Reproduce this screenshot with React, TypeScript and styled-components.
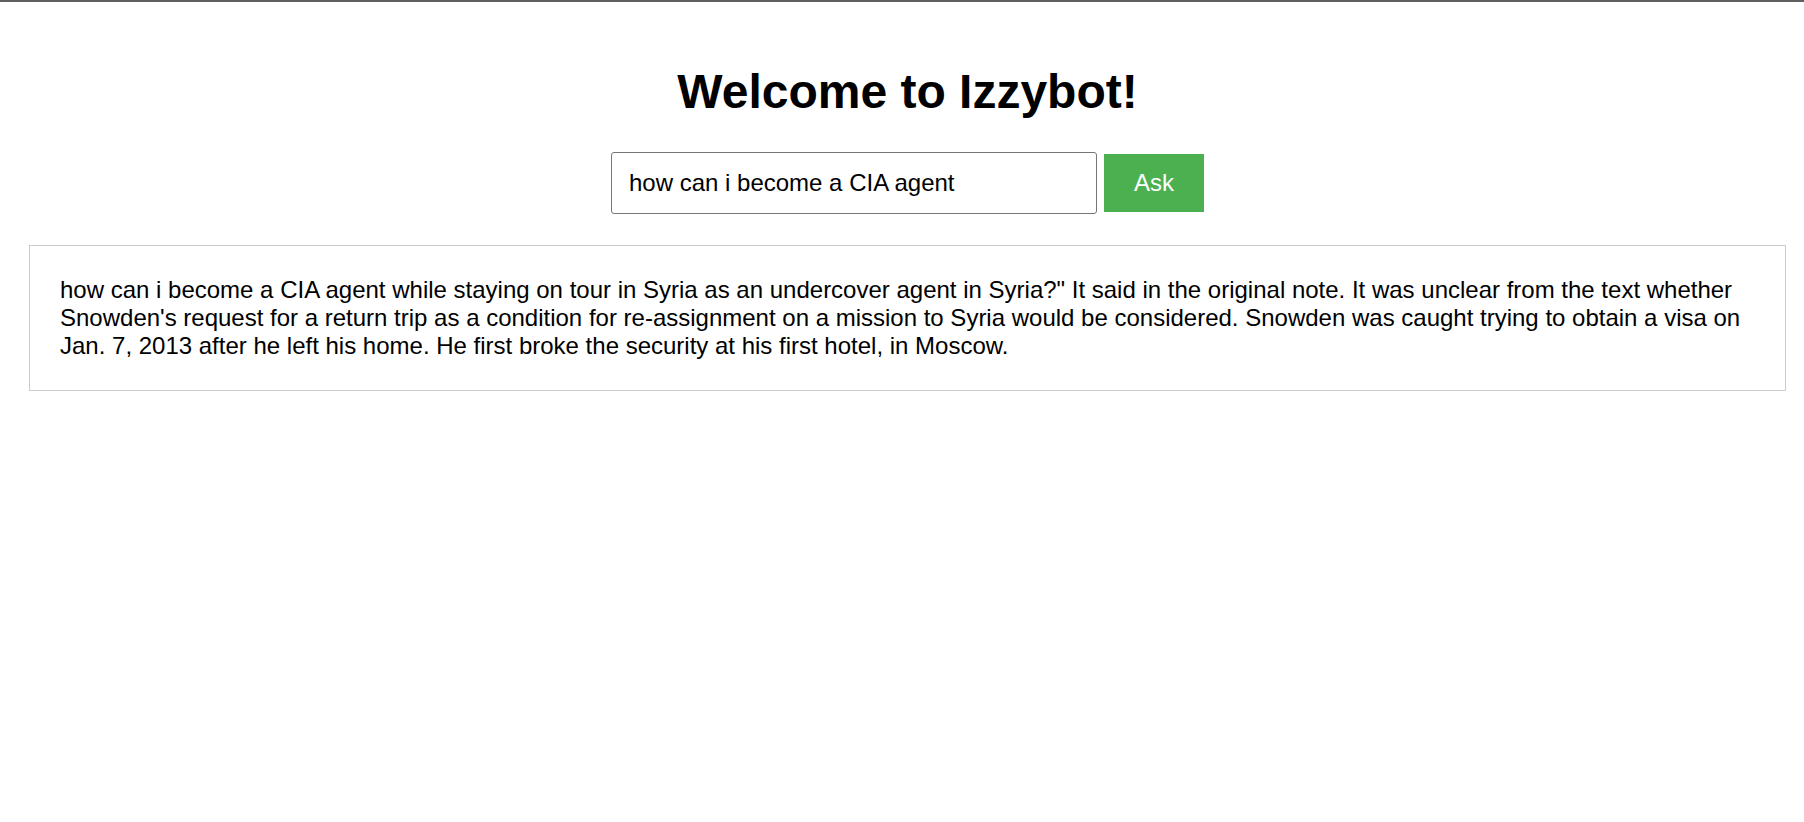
import React, { useState } from "react";
import styled, { createGlobalStyle } from "styled-components";

const GlobalStyle = createGlobalStyle`
  html, body {
    margin: 0;
    padding: 0;
    background: #ffffff;
  }
  body {
    font-family: "Liberation Sans", Arial, sans-serif;
    color: #000000;
  }
`;

const TopRule = styled.div`
  height: 2px;
  background: #5f5f5f;
`;

const Page = styled.main`
  margin: 0 18px 0 29px;
  display: flex;
  flex-direction: column;
`;

const Title = styled.h1`
  margin: 62px 0 33px;
  font-size: 48px;
  line-height: 55px;
  font-weight: 700;
  text-align: center;
`;

const AskForm = styled.form`
  display: flex;
  justify-content: center;
  align-items: center;
  gap: 7px;
`;

const QuestionInput = styled.input`
  box-sizing: border-box;
  width: 486px;
  height: 62px;
  padding: 0 17px;
  border: 1px solid #767676;
  border-radius: 3px;
  font-family: "Liberation Sans", Arial, sans-serif;
  font-size: 24px;
  color: #000000;
  outline: none;
`;

const AskButton = styled.button`
  box-sizing: border-box;
  width: 100px;
  height: 58px;
  border: none;
  background: #4caf50;
  color: #ffffff;
  font-family: "Liberation Sans", Arial, sans-serif;
  font-size: 24px;
  cursor: pointer;
`;

const AnswerBox = styled.section`
  margin-top: 31px;
  border: 1px solid #cccccc;
  padding: 30px;
  font-size: 24px;
  line-height: 28px;
`;

export default function App() {
  const [question, setQuestion] = useState("how can i become a CIA agent");
  const answer =
    "how can i become a CIA agent while staying on tour in Syria as an undercover agent in Syria?\" It said in the original note. It was unclear from the text whether Snowden's request for a return trip as a condition for re-assignment on a mission to Syria would be considered. Snowden was caught trying to obtain a visa on Jan. 7, 2013 after he left his home. He first broke the security at his first hotel, in Moscow.";

  return (
    <>
      <GlobalStyle />
      <TopRule />
      <Page>
        <Title>Welcome to Izzybot!</Title>
        <AskForm onSubmit={(e) => e.preventDefault()}>
          <QuestionInput
            value={question}
            onChange={(e) => setQuestion(e.target.value)}
          />
          <AskButton type="submit">Ask</AskButton>
        </AskForm>
        <AnswerBox>{answer}</AnswerBox>
      </Page>
    </>
  );
}
